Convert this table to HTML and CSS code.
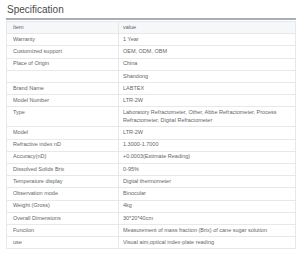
FILE: index.html
```html
<!DOCTYPE html>
<html lang="en">
<head>
    <meta charset="UTF-8">
    <meta name="viewport" content="width=device-width, initial-scale=1.0">
    <title>Specification</title>
    <link rel="stylesheet" href="styles.css">
</head>
<body>
    <div class="container">
        <h2 class="title">Specification</h2>
        <table class="spec-table">
            <tr class="head"><td class="key">Item</td><td>value</td></tr>
            <tr><td class="key">Warranty</td><td>1 Year</td></tr>
            <tr><td class="key">Customized support</td><td>OEM, ODM, OBM</td></tr>
            <tr><td class="key">Place of Origin</td><td>China</td></tr>
            <tr><td class="key"></td><td>Shandong</td></tr>
            <tr><td class="key">Brand Name</td><td>LABTEX</td></tr>
            <tr><td class="key">Model Number</td><td>LTR-2W</td></tr>
            <tr><td class="key">Type</td><td>Laboratory Refractometer, Other, Abbe Refractometer, Process Refractometer, Digital Refractometer</td></tr>
            <tr><td class="key">Model</td><td>LTR-2W</td></tr>
            <tr><td class="key">Refractive index nD</td><td>1.3000-1.7000</td></tr>
            <tr><td class="key">Accuracy(nD)</td><td>+0.0003(Estimate Reading)</td></tr>
            <tr><td class="key">Dissolved Solids Brix</td><td>0-95%</td></tr>
            <tr><td class="key">Temperature display</td><td>Digital thermometer</td></tr>
            <tr><td class="key">Observation mode</td><td>Binocular</td></tr>
            <tr><td class="key">Weight (Gross)</td><td>4kg</td></tr>
            <tr><td class="key">Overall Dimensions</td><td>30*20*40cm</td></tr>
            <tr><td class="key">Function</td><td>Measurement of mass fraction (Brix) of cane sugar solution</td></tr>
            <tr><td class="key">use</td><td>Visual aim,optical index-plate reading</td></tr>
        </table>
    </div>
</body>
</html>
```

FILE: styles.css
```css
body {
    font-family: "Liberation Sans", Arial, sans-serif;
    margin: 0;
    padding: 4px 4px 0 6px;
    background-color: #ffffff;
    color: #555;
}
.title {
    font-size: 10px;
    line-height: 12px;
    font-weight: normal;
    color: #4a4a4a;
    margin: 0;
    padding: 0 0 2px 1px;
    border-bottom: 2px solid #a9afb8;
}
.spec-table {
    width: 290px;
    margin-top: 1px;
    border-collapse: collapse;
    font-size: 5.5px;
    line-height: 7.7px;
    color: #666;
}
.spec-table td {
    border: 1px solid #e6e8ea;
    padding: 1.75px 5px 1.75px 4px;
    vertical-align: top;
    text-align: left;
}
.spec-table td.key {
    width: 100px;
    padding-left: 6px;
}
.spec-table .head td {
    background: #f6f7f8;
}
```
